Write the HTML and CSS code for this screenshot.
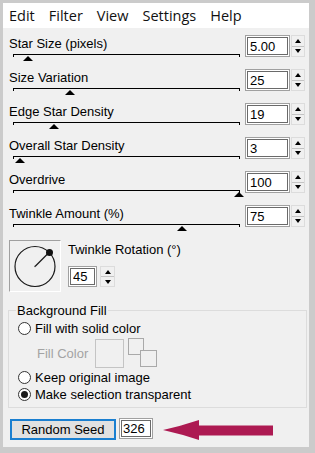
FILE: index.html
```html
<!DOCTYPE html>
<html lang="en">
<head>
  <meta charset="UTF-8">
  <title>Star Filter</title>
  <link rel="stylesheet" href="styles.css">
</head>
<body>
  <div class="window">
    <div class="menubar">
      <span>Edit</span>
      <span>Filter</span>
      <span>View</span>
      <span>Settings</span>
      <span>Help</span>
    </div>

    <div class="panel">
      <div class="param">
        <div class="param-main">
          <div class="param-label">Star Size (pixels)</div>
          <div class="track"><span class="thumb" style="left: 6.6%"></span></div>
        </div>
        <input class="num" type="text" value="5.00">
        <div class="spin"><span class="up"></span><span class="down"></span></div>
      </div>

      <div class="param">
        <div class="param-main">
          <div class="param-label">Size Variation</div>
          <div class="track"><span class="thumb" style="left: 25%"></span></div>
        </div>
        <input class="num" type="text" value="25">
        <div class="spin"><span class="up"></span><span class="down"></span></div>
      </div>

      <div class="param">
        <div class="param-main">
          <div class="param-label">Edge Star Density</div>
          <div class="track"><span class="thumb" style="left: 18%"></span></div>
        </div>
        <input class="num" type="text" value="19">
        <div class="spin"><span class="up"></span><span class="down"></span></div>
      </div>

      <div class="param">
        <div class="param-main">
          <div class="param-label">Overall Star Density</div>
          <div class="track"><span class="thumb" style="left: 3%"></span></div>
        </div>
        <input class="num" type="text" value="3">
        <div class="spin"><span class="up"></span><span class="down"></span></div>
      </div>

      <div class="param">
        <div class="param-main">
          <div class="param-label">Overdrive</div>
          <div class="track"><span class="thumb" style="left: 100%"></span></div>
        </div>
        <input class="num" type="text" value="100">
        <div class="spin"><span class="up"></span><span class="down"></span></div>
      </div>

      <div class="param">
        <div class="param-main">
          <div class="param-label">Twinkle Amount (%)</div>
          <div class="track"><span class="thumb" style="left: 75%"></span></div>
        </div>
        <input class="num" type="text" value="75">
        <div class="spin"><span class="up"></span><span class="down"></span></div>
      </div>

      <div class="rotation">
        <div class="dial">
          <svg width="50" height="50" viewBox="0 0 50 50">
            <circle cx="25" cy="25.5" r="20" fill="none" stroke="#1a1a1a" stroke-width="1.2"/>
            <line x1="25" y1="25.5" x2="39" y2="11.5" stroke="#1a1a1a" stroke-width="1.2"/>
            <circle cx="39.5" cy="11.5" r="3.5" fill="#111"/>
            <circle cx="25" cy="25.5" r="0.8" fill="#555"/>
          </svg>
        </div>
        <div class="rotation-ctrl">
          <div class="param-label">Twinkle Rotation (°)</div>
          <div class="rotation-input">
            <input class="num small" type="text" value="45">
            <div class="spin"><span class="up"></span><span class="down"></span></div>
          </div>
        </div>
      </div>

      <fieldset class="fill">
        <legend>Background Fill</legend>
        <label class="opt"><input type="radio" name="fill"> Fill with solid color</label>
        <div class="color-row">
          <span class="color-label">Fill Color</span>
          <span class="swatch"></span>
          <svg class="swap" width="30" height="30" viewBox="0 0 30 30">
            <rect x="0.5" y="0.5" width="15" height="16" fill="#f0f0f0" stroke="#a9a9a9"/>
            <rect x="12.5" y="12.5" width="16" height="16" fill="#f0f0f0" stroke="#a9a9a9"/>
          </svg>
        </div>
        <label class="opt"><input type="radio" name="fill"> Keep original image</label>
        <label class="opt"><input type="radio" name="fill" checked> Make selection transparent</label>
      </fieldset>

      <div class="seed-row">
        <button class="seed-btn" type="button">Random Seed</button>
        <input class="num seed" type="text" value="326">
        <svg class="pointer" width="112" height="22" viewBox="0 0 112 22">
          <path d="M0 11 Q18 7 36 1 L36 6.5 L110 6.5 L110 16.5 L36 16.5 L36 21 Q18 15 0 11 Z" fill="#ad1a52"/>
        </svg>
      </div>
    </div>
  </div>
</body>
</html>
```

FILE: styles.css
```css
body {
  margin: 0;
  background: #cbcbcb;
  font-family: "Liberation Sans", Arial, sans-serif;
  font-size: 13px;
  color: #000;
}

.window {
  margin: 3px 6px 6px 3px;
  width: 306px;
  height: 444px;
  background: #f0f0f0;
  display: flex;
  flex-direction: column;
}

.menubar {
  height: 25px;
  background: #fff;
  display: flex;
  gap: 14px;
  padding-left: 6px;
  font-family: "Open Sans", sans-serif;
  font-size: 14.5px;
  line-height: 25px;
  color: #111;
}

.panel {
  padding: 7px 4px 0 6px;
}

/* slider rows */
.param {
  display: flex;
  align-items: flex-start;
  height: 34px;
}

.param-main {
  width: 231px;
}

.param-label {
  line-height: 15px;
  margin-top: 1px;
  white-space: nowrap;
}

.track {
  position: relative;
  margin: 3px 0 0 4px;
  height: 2px;
  border: 1px solid #000;
  border-bottom: 0;
}

.thumb {
  position: absolute;
  top: 1px;
  width: 0;
  height: 0;
  margin-left: -5.5px;
  border-left: 5.5px solid transparent;
  border-right: 5.5px solid transparent;
  border-bottom: 5px solid #000;
}

.num {
  box-sizing: border-box;
  width: 45px;
  height: 22px;
  margin: 0 0 0 5px;
  padding: 0 0 0 4px;
  border: 1px solid #a0a0a0;
  box-shadow: inset 0 0 0 1px #fff, inset 0 0 0 2px #6a6a6a;
  background: #fff;
  font-family: "Liberation Sans", Arial, sans-serif;
  font-size: 13px;
  color: #000;
  outline: none;
}

.spin {
  box-sizing: border-box;
  width: 14px;
  height: 22px;
  margin-left: 1px;
  display: flex;
  flex-direction: column;
  border: 1px solid #dcdcdc;
  background: #f0f0f0;
}

.spin span {
  flex: 1;
  display: flex;
  align-items: center;
  justify-content: center;
}

.spin .up {
  border-bottom: 1px solid #c4c4c4;
}

.spin .up::before {
  content: "";
  border-left: 3.5px solid transparent;
  border-right: 3.5px solid transparent;
  border-bottom: 4px solid #000;
}

.spin .down::before {
  content: "";
  border-left: 3.5px solid transparent;
  border-right: 3.5px solid transparent;
  border-top: 4px solid #000;
}

/* rotation dial */
.rotation {
  display: flex;
  margin-top: 1px;
}

.dial {
  box-sizing: border-box;
  width: 52px;
  height: 52px;
  border: 1px solid;
  border-color: #a0a0a0 #fff #fff #a0a0a0;
}

.dial svg {
  display: block;
}

.rotation-ctrl {
  margin-left: 7px;
}

.rotation-ctrl .param-label {
  margin-top: 2px;
}

.rotation-input {
  display: flex;
  margin-top: 9px;
}

.num.small {
  width: 29px;
  margin-left: 0;
  height: 21px;
}

.rotation-input .spin {
  margin-left: 3px;
  width: 15px;
  height: 21px;
}

/* background fill group */
.fill {
  margin: 12px -2px 0 -1px;
  padding: 3px 0 4px 9px;
  border: 1px solid #dcdcdc;
}

.fill legend {
  margin-left: -2px;
  padding: 0 1px;
  line-height: 13px;
}

.opt {
  display: flex;
  align-items: center;
  gap: 4px;
  height: 17px;
  white-space: nowrap;
}

.opt input {
  appearance: none;
  box-sizing: border-box;
  width: 13px;
  height: 13px;
  margin: 0;
  border: 1px solid #333;
  border-radius: 50%;
  background: #fff;
  display: grid;
  place-items: center;
}

.opt input:checked::before {
  content: "";
  width: 7px;
  height: 7px;
  border-radius: 50%;
  background: #1a1a1a;
}

.color-row {
  display: flex;
  align-items: center;
  height: 30px;
  margin: 1px 0 1px;
}

.color-label {
  margin-left: 19px;
  color: #a3a3a3;
}

.swatch {
  box-sizing: border-box;
  width: 29px;
  height: 29px;
  margin-left: 7px;
  border: 1px solid #c4c4c4;
}

.swap {
  margin-left: 4px;
  align-self: flex-start;
}

/* seed row */
.seed-row {
  display: flex;
  align-items: flex-start;
  margin-top: 10px;
}

.seed-btn {
  box-sizing: border-box;
  width: 106px;
  height: 21px;
  margin: 1px 0 0 1px;
  padding: 0;
  border: 2px solid #1a7fd0;
  background: #e1e1e1;
  font-family: "Liberation Sans", Arial, sans-serif;
  font-size: 13px;
  color: #000;
}

.num.seed {
  width: 34px;
  height: 21px;
  margin-left: 3px;
  padding-left: 3px;
}

.pointer {
  margin: 1px 0 0 10px;
}
```
